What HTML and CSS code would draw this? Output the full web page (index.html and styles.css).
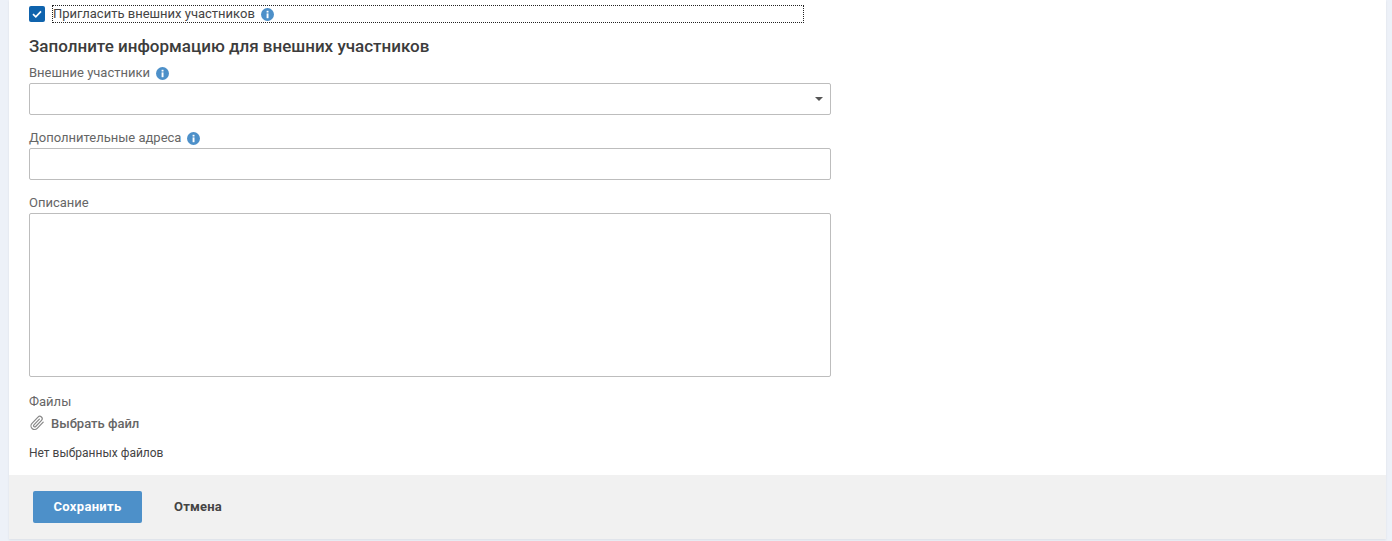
FILE: index.html
```html
<!DOCTYPE html>
<html>
<head>
    <meta http-equiv="Content-Type" content="text/html;charset=UTF-8"/>
    <title>Внешние участники</title>
    <link rel="stylesheet" href="styles.css">
</head>
<body>
<div class="card">
    <div class="content">
        <div class="invite-row">
            <span class="checkbox">
                <svg width="12" height="12" viewBox="0 0 12 12"><path d="M2 6.2l2.8 2.6L10 3.4" fill="none" stroke="#fff" stroke-width="1.7"/></svg>
            </span>
            <label class="invite-label">
                Пригласить внешних участников
                <svg class="info" width="13" height="13" viewBox="0 0 13 13"><circle cx="6.5" cy="6.5" r="6.5" fill="#4d90c9"/><rect x="5.6" y="5.4" width="1.9" height="4.8" fill="#fff"/><rect x="5.6" y="2.8" width="1.9" height="1.7" fill="#fff"/></svg>
            </label>
        </div>
        <h2 class="section-title">Заполните информацию для внешних участников</h2>

        <div class="field">
            <label class="field-label">
                Внешние участники
                <svg class="info" width="13" height="13" viewBox="0 0 13 13"><circle cx="6.5" cy="6.5" r="6.5" fill="#4d90c9"/><rect x="5.6" y="5.4" width="1.9" height="4.8" fill="#fff"/><rect x="5.6" y="2.8" width="1.9" height="1.7" fill="#fff"/></svg>
            </label>
            <div class="input select"><span class="caret"></span></div>
        </div>

        <div class="field">
            <label class="field-label">
                Дополнительные адреса
                <svg class="info" width="13" height="13" viewBox="0 0 13 13"><circle cx="6.5" cy="6.5" r="6.5" fill="#4d90c9"/><rect x="5.6" y="5.4" width="1.9" height="4.8" fill="#fff"/><rect x="5.6" y="2.8" width="1.9" height="1.7" fill="#fff"/></svg>
            </label>
            <div class="input"></div>
        </div>

        <div class="field">
            <label class="field-label">Описание</label>
            <div class="input textarea"></div>
        </div>

        <div class="files">
            <label class="field-label">Файлы</label>
            <div class="file-pick">
                <svg width="16" height="16" viewBox="0 0 16 16"><path d="M14.2 7.2l-6 6.2a3.6 3.6 0 0 1-5.2-5l6-6.3a2.4 2.4 0 0 1 3.5 3.3l-5.8 6.1a1.2 1.2 0 0 1-1.8-1.6l5.5-5.8" fill="none" stroke="#888" stroke-width="1.2" stroke-linecap="round" stroke-linejoin="round"/></svg>
                <span>Выбрать файл</span>
            </div>
            <div class="no-files">Нет выбранных файлов</div>
        </div>
    </div>
    <div class="footer">
        <button class="btn-save">Сохранить</button>
        <button class="btn-cancel">Отмена</button>
    </div>
</div>
</body>
</html>
```

FILE: styles.css
```css
html, body {
    height: 100%;
}

body {
    margin: 0;
    background-color: #edf1f8;
    font-family: Roboto, "Liberation Sans", sans-serif;
    font-size: 13px;
    color: #666;
    overflow: hidden;
}

.card {
    margin: 0 6px 0 9px;
    background: #fff;
    height: 539px;
    display: flex;
    flex-direction: column;
    box-shadow: 0 1px 2px rgba(0, 0, 0, 0.08);
}

.content {
    flex: 1;
    padding: 5px 0 0 20px;
}

.invite-row {
    display: flex;
    align-items: center;
    height: 18px;
}

.checkbox {
    width: 16px;
    height: 16px;
    background: #0f63ad;
    border-radius: 2px;
    display: flex;
    align-items: center;
    justify-content: center;
    margin-right: 7px;
}

.invite-label {
    width: 750px;
    height: 16px;
    border: 1px dotted #222;
    color: #444;
    display: flex;
    align-items: center;
    line-height: 16px;
}

.info {
    margin-left: 6px;
}

.section-title {
    margin: 13px 0 0 0;
    font-size: 17px;
    font-weight: 500;
    line-height: 20px;
    color: #3c3c3c;
}

.field {
    width: 802px;
    margin-top: 9px;
    margin-bottom: 15px;
}

.field + .field {
    margin-top: 0;
}

.field-label {
    display: flex;
    align-items: center;
    height: 16px;
    line-height: 16px;
    margin-bottom: 2px;
    color: #666;
}

.input {
    box-sizing: border-box;
    height: 32px;
    border: 1px solid #bdbdbd;
    border-radius: 2px;
    background: #fff;
    position: relative;
}

.textarea {
    height: 164px;
}

.caret {
    position: absolute;
    right: 7px;
    top: 13px;
    border-left: 4px solid transparent;
    border-right: 4px solid transparent;
    border-top: 4px solid #555;
}

.files {
    margin-top: 17px;
}

.file-pick {
    display: flex;
    align-items: center;
    gap: 6px;
    height: 20px;
    margin-top: 3px;
    font-weight: 500;
    color: #666;
}

.no-files {
    margin-top: 12px;
    font-size: 12px;
    line-height: 16px;
    color: #444;
}

.footer {
    height: 64px;
    background: #f1f1f1;
    display: flex;
    align-items: center;
    padding-left: 24px;
}

.btn-save {
    width: 109px;
    height: 32px;
    background-color: #4d90c9;
    color: #fff;
    border: none;
    border-radius: 2px;
    font-family: inherit;
    font-size: 13px;
    font-weight: 700;
    letter-spacing: 0.3px;
    padding: 0 0 2px 0;
    cursor: pointer;
}

.btn-cancel {
    background: none;
    border: none;
    margin-left: 32px;
    padding: 0 0 2px 0;
    font-family: inherit;
    font-size: 13px;
    font-weight: 700;
    letter-spacing: 0.2px;
    color: #444;
    cursor: pointer;
}
```
